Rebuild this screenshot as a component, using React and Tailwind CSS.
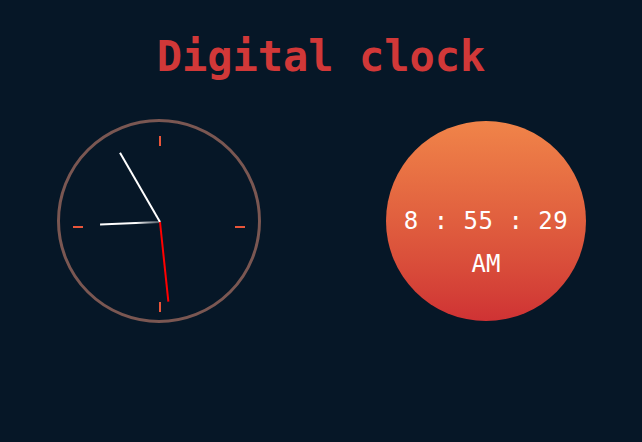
import React from 'react'

const H = 8, M = 55, S = 29

function hand(deg, len) {
  const r = (deg * Math.PI) / 180
  return { x2: 100 + Math.sin(r) * len, y2: 100 - Math.cos(r) * len }
}

function AnalogClock() {
  const hr = hand((H % 12) * 30 + M * 0.5, 60)
  const mn = hand(M * 6, 80)
  const sc = hand(S * 6, 80)
  return (
    <div className="w-[204px] h-[204px] rounded-full border-[3px] border-[#7a5752] relative">
      <svg width="198" height="198" viewBox="0 0 198 198" className="absolute left-0 top-0">
        <defs>
          <linearGradient id="hourg" x1="100" y1="0" x2="40" y2="0" gradientUnits="userSpaceOnUse">
            <stop offset="0" stopColor="#ffffff" stopOpacity="0.3" />
            <stop offset="0.4" stopColor="#ffffff" />
            <stop offset="1" stopColor="#ffffff" />
          </linearGradient>
        </defs>
        <g transform="translate(-1,-2)">
          <line x1="101" y1="16" x2="101" y2="26" stroke="#e8553a" strokeWidth="2" />
          <line x1="101" y1="182" x2="101" y2="192" stroke="#e8553a" strokeWidth="2" />
          <line x1="14" y1="107" x2="24" y2="107" stroke="#e8553a" strokeWidth="2" />
          <line x1="176" y1="107" x2="186" y2="107" stroke="#e8553a" strokeWidth="2" />
          <line x1="101" y1="102" x2={hr.x2 + 1} y2={hr.y2 + 2} stroke="url(#hourg)" strokeWidth="2" />
          <line x1="101" y1="102" x2={mn.x2 + 1} y2={mn.y2 + 2} stroke="#ffffff" strokeWidth="2" />
          <line x1="101" y1="102" x2={sc.x2 + 1} y2={sc.y2 + 2} stroke="#ff0000" strokeWidth="2" />
        </g>
      </svg>
    </div>
  )
}

function DigitalClock() {
  return (
    <div className="w-[200px] h-[200px] rounded-full bg-gradient-to-b from-[#f08449] to-[#cf3234] flex flex-col items-center justify-center pt-[42px] text-white font-['DejaVu_Sans_Mono',monospace]">
      <div className="text-[24px] leading-none tracking-[0.5px]">{H} : {M} : {S}</div>
      <div className="text-[24px] leading-none mt-[19px]">AM</div>
    </div>
  )
}

export default function App() {
  return (
    <div className="w-[642px] h-[442px] bg-[#061727] overflow-hidden">
      <h1 className="text-center pt-[33px] text-[42px] leading-[48px] font-bold text-[#d13838] font-['DejaVu_Sans_Mono',monospace]">
        Digital clock
      </h1>
      <div className="flex items-start mt-[38px]">
        <div className="ml-[57px]">
          <AnalogClock />
        </div>
        <div className="ml-[125px] mt-[2px]">
          <DigitalClock />
        </div>
      </div>
    </div>
  )
}
